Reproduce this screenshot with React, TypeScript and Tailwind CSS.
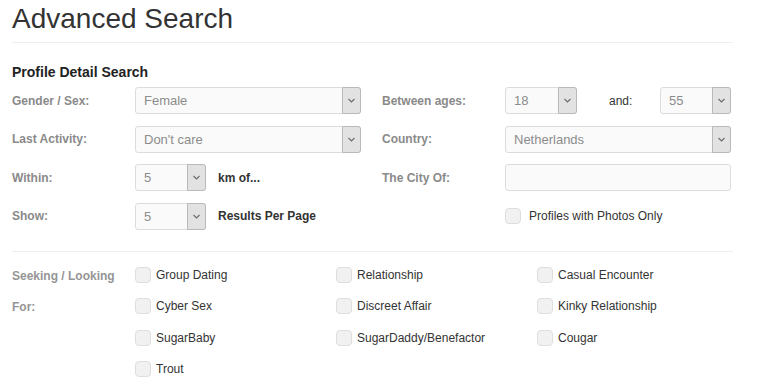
import React from "react";

function Chevron() {
  return (
    <svg width="7" height="5" viewBox="0 0 7 5" fill="none">
      <polyline points="0.5,1 3.5,4 6.5,1" stroke="#6b6b6b" strokeWidth="1.1" />
    </svg>
  );
}

function Select({ value, className }: { value: string; className: string }) {
  return (
    <div
      className={`flex h-[27px] items-stretch rounded-[3px] border border-[#dcdcdc] bg-[#fafafa] ${className}`}
    >
      <span className="flex-1 pl-[8px] text-[13px] leading-[25px] text-[#8c8c8c]">
        {value}
      </span>
      <span className="-my-px -mr-px flex w-[19px] items-center justify-center rounded-r-[3px] border border-[#b9b9b9] bg-[#e2e2e2]">
        <Chevron />
      </span>
    </div>
  );
}

function Box() {
  return (
    <span className="h-[16px] w-[16px] shrink-0 rounded-[4px] border border-[#dedede] bg-[#f1f1f1]" />
  );
}

function Check({ label }: { label: string }) {
  return (
    <div className="flex h-[16px] w-[201px] items-center gap-[5px]">
      <Box />
      <span className="text-[12px] text-[#333]">{label}</span>
    </div>
  );
}

function Label({ children }: { children: React.ReactNode }) {
  return (
    <div className="w-[123px] shrink-0 text-[12px] font-bold text-[#8a8a8a]">
      {children}
    </div>
  );
}

export default function App() {
  const seeking = [
    ["Group Dating", "Relationship", "Casual Encounter"],
    ["Cyber Sex", "Discreet Affair", "Kinky Relationship"],
    ["SugarBaby", "SugarDaddy/Benefactor", "Cougar"],
    ["Trout"],
  ];

  return (
    <div className="min-h-[387px] w-[768px] bg-white font-['Liberation_Sans',Arial,sans-serif]">
      <div className="ml-[12px] w-[721px] pt-[3px]">
        <h1 className="text-[28px] leading-[32px] text-[#333]">Advanced Search</h1>
        <div className="mt-[7px] h-px bg-[#eeeeee]" />

        <h2 className="mt-[19px] text-[14px] font-bold leading-[20px] text-[#222]">
          Profile Detail Search
        </h2>

        <div className="mt-[5px] flex flex-col gap-[11.5px]">
          <div className="flex items-center">
            <Label>Gender / Sex:</Label>
            <Select value="Female" className="w-[226px]" />
            <div className="ml-[21px] flex items-center">
              <Label>Between ages:</Label>
              <Select value="18" className="w-[72px]" />
              <span className="ml-[32px] w-[51px] text-[12px] text-[#333]">and:</span>
              <Select value="55" className="w-[71px]" />
            </div>
          </div>

          <div className="flex items-center">
            <Label>Last Activity:</Label>
            <Select value="Don't care" className="w-[226px]" />
            <div className="ml-[21px] flex items-center">
              <Label>Country:</Label>
              <Select value="Netherlands" className="w-[226px]" />
            </div>
          </div>

          <div className="flex items-center">
            <Label>Within:</Label>
            <div className="flex w-[226px] items-center">
              <Select value="5" className="w-[71px]" />
              <span className="ml-[12px] text-[12px] font-bold text-[#333]">km of...</span>
            </div>
            <div className="ml-[21px] flex items-center">
              <Label>The City Of:</Label>
              <div className="h-[27px] w-[226px] rounded-[3px] border border-[#dcdcdc] bg-[#fafafa]" />
            </div>
          </div>

          <div className="flex items-center">
            <Label>Show:</Label>
            <div className="flex w-[226px] items-center">
              <Select value="5" className="w-[71px]" />
              <span className="ml-[12px] text-[12px] font-bold text-[#333]">
                Results Per Page
              </span>
            </div>
            <div className="ml-[21px] flex h-[27px] items-center">
              <div className="w-[123px]" />
              <div className="flex items-center gap-[8px]">
                <Box />
                <span className="text-[12px] text-[#333]">Profiles with Photos Only</span>
              </div>
            </div>
          </div>
        </div>

        <div className="mt-[21px] h-px bg-[#eeeeee]" />

        <div className="mt-[15px] flex">
          <div className="w-[123px] shrink-0 pt-[1px] text-[12px] font-bold leading-[16px] text-[#959595]">
            <div>Seeking / Looking</div>
            <div className="mt-[15.5px]">For:</div>
          </div>
          <div className="flex flex-col gap-[15.5px]">
            {seeking.map((row, i) => (
              <div key={i} className="flex">
                {row.map((s) => (
                  <Check key={s} label={s} />
                ))}
              </div>
            ))}
          </div>
        </div>
      </div>
    </div>
  );
}
